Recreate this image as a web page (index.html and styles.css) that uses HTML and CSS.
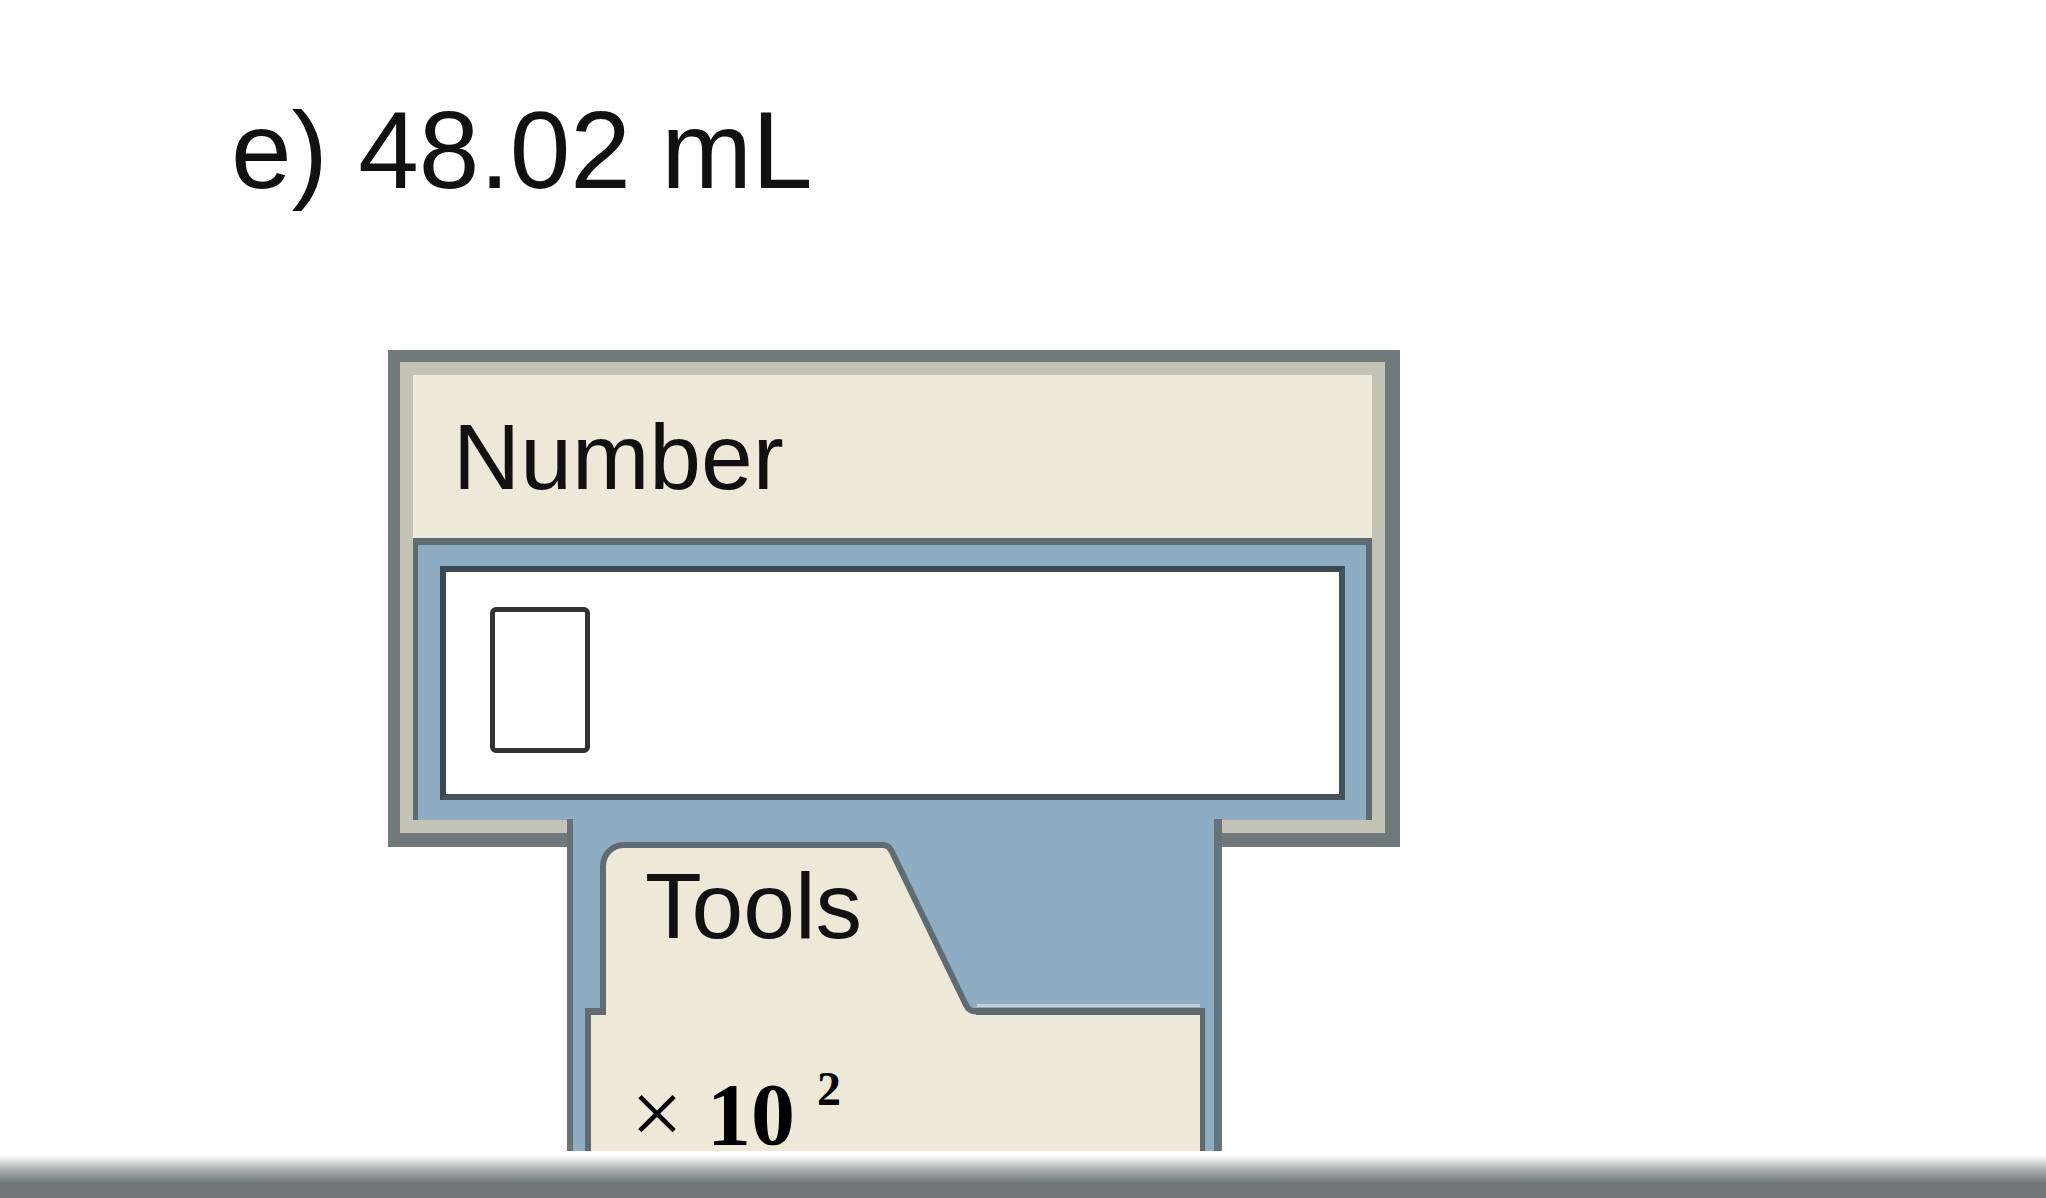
FILE: index.html
```html
<!DOCTYPE html>
<html lang="en">
<head>
    <meta charset="UTF-8">
    <meta name="viewport" content="width=device-width, initial-scale=1.0">
    <title>Number entry</title>
    <link rel="stylesheet" href="styles.css">
</head>
<body>

    <div class="page">
        <p class="question">e) 48.02 mL</p>

        <!-- Caixa de resposta -->
        <div class="answer">
            <div class="number-panel">
                <div class="panel-title">Number</div>
                <div class="entry-well">
                    <div class="entry-field">
                        <span class="caret-box"></span>
                    </div>
                </div>
            </div>

            <!-- Gaveta de ferramentas -->
            <div class="tools-tail">
                <div class="tab-row">
                    <div class="tools-tab">Tools</div>
                    <svg class="tab-slant" width="325" height="173" viewBox="0 0 325 173">
                        <path d="M0 3 H3 Q9 3 12 10 L86 163 Q89 169.5 96 169.5 V173 H0 Z" fill="#ece9d8"/>
                        <path d="M97 163.5 H320" stroke="#c6cfd3" stroke-width="3"/>
                        <path d="M0 3 H3 Q9 3 12 10 L86 163 Q89 169.5 96 169.5 H325" fill="none" stroke="#5f6b70" stroke-width="6"/>
                    </svg>
                </div>
                <div class="tools-body">
                    <span class="times-sign">×</span><span class="power">10<sup>2</sup></span>
                </div>
            </div>
        </div>
    </div>

    <div class="status-bar"></div>

</body>
</html>
```

FILE: styles.css
```css
body {
    margin: 0;
    background: #fff;
    font-family: "Liberation Sans", Arial, sans-serif;
    color: #111;
}
.page {
    box-sizing: border-box;
    height: 1155px;
    padding-top: 96px;
}
.question {
    margin: 0 0 0 231px;
    font-size: 109px;
    line-height: 1;
}
.answer {
    margin: 145px 0 0 388px;
    width: 1012px;
}
.number-panel {
    box-sizing: border-box;
    width: 1012px;
    height: 497px;
    border-style: solid;
    border-color: #707a7a;
    border-width: 12px 15px 14px 12px;
    box-shadow: inset 0 0 0 13px #c2c3b4;
    background: #ece9d8;
    padding: 13px;
}
.panel-title {
    box-sizing: border-box;
    height: 163px;
    padding: 36px 0 0 40px;
    font-size: 93px;
    line-height: 1;
}
.entry-well {
    box-sizing: border-box;
    height: 282px;
    background: #8eacc2;
    border-style: solid;
    border-color: #5d6a72;
    border-width: 7px 6px 0 5px;
    padding: 21px 21px 20px 22px;
}
.entry-field {
    box-sizing: border-box;
    height: 234px;
    background: #fff;
    border: 6px solid #47535c;
    border-top-color: #3d4851;
    border-left-color: #3d4851;
    padding: 35px 0 0 44px;
}
.caret-box {
    display: block;
    box-sizing: border-box;
    width: 100px;
    height: 146px;
    border: 5px solid #333;
    border-radius: 6px;
}
.tools-tail {
    position: relative;
    z-index: 1;
    box-sizing: border-box;
    width: 655px;
    height: 332px;
    margin: -28px 0 0 179px;
    background: #8eacc2;
    border-left: 6px solid #66737a;
    border-right: 8px solid #66737a;
    padding: 23px 0 0 12px;
}
.tab-row {
    position: relative;
    z-index: 1;
    display: flex;
    height: 173px;
    margin-left: 15px;
}
.tools-tab {
    box-sizing: border-box;
    width: 280px;
    height: 173px;
    background: #ece9d8;
    border-top: 6px solid #5f6b70;
    border-left: 6px solid #5f6b70;
    border-top-left-radius: 24px;
    padding: 12px 0 0 39px;
    font-size: 93px;
    line-height: 1;
}
.tab-slant {
    display: block;
    flex: none;
}
.tools-body {
    box-sizing: border-box;
    width: 620px;
    height: 143px;
    margin-top: -7px;
    background: #ece9d8;
    border: 6px solid #5f6b70;
    border-top-width: 7px;
    border-right-width: 5px;
    border-bottom: none;
    padding: 62px 0 0 40px;
    font-family: "Liberation Serif", "Times New Roman", serif;
    font-size: 88px;
    line-height: 0.8;
    color: #000;
}
.times-sign {
    font-size: 92px;
}
.power {
    margin-left: 24px;
    font-weight: bold;
}
.power sup {
    font-size: 48px;
    vertical-align: 39px;
    line-height: 0;
    margin-left: 22px;
}
.status-bar {
    height: 43px;
    background: linear-gradient(#ffffff 0%, #a9adad 35%, #6e7676 65%, #6e7676 100%);
}
```
